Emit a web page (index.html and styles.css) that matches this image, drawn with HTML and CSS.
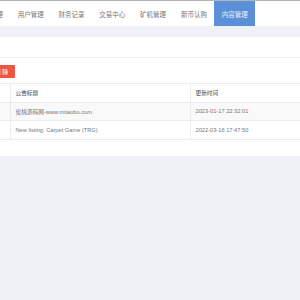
FILE: index.html
```html
<!DOCTYPE html>
<html>
<head>
<meta charset="utf-8">
<link rel="stylesheet" href="styles.css">
</head>
<body>
<div class="topline"></div>
<nav class="nav">
  <div class="tab">系统管理</div>
  <div class="tab">用户管理</div>
  <div class="tab">财务记录</div>
  <div class="tab">交易中心</div>
  <div class="tab">矿机管理</div>
  <div class="tab">新币认购</div>
  <div class="tab active">内容管理</div>
</nav>
<div class="gap"></div>
<section class="panel">
  <div class="panel-head"></div>
  <div class="toolbar">
    <button class="btn-del">删 除</button>
  </div>
  <table class="grid">
    <thead>
      <tr><th class="c1"></th><th class="c2">公告标题</th><th class="c3">更新时间</th></tr>
    </thead>
    <tbody>
      <tr class="odd"><td class="c1"></td><td>蜜桃源码网-www.mitaobo.com</td><td>2023-01-17 22:32:01</td></tr>
      <tr><td class="c1"></td><td>New listing: Carpet Game (TRG)</td><td>2022-03-16 17:47:50</td></tr>
    </tbody>
  </table>
</section>
</body>
</html>
```
FILE: styles.css
```css
html, body {
  margin: 0;
  padding: 0;
  background: #f0f1f6;
  overflow: hidden;
  font-family: "Liberation Sans", "Noto Sans CJK SC", sans-serif;
}
.topline {
  height: 1px;
  background: #b4b4b8;
}
.nav {
  display: flex;
  height: 25px;
  background: #fff;
  margin-left: -30.5px;
}
.tab {
  width: 40.8px;
  flex: none;
  display: flex;
  align-items: center;
  justify-content: center;
  font-size: 6.5px;
  color: #777;
}
.tab.active {
  background: #5b8fd7;
  color: #eef3fc;
}
.gap {
  height: 11px;
}
.panel {
  background: #fff;
  height: 119px;
}
.panel-head {
  height: 20px;
  border-bottom: 1px solid #efefef;
}
.toolbar {
  padding-top: 7px;
  height: 18px;
  margin-left: -12px;
}
.btn-del {
  display: block;
  border: none;
  border-radius: 1px;
  background: #ec5743;
  color: #fff;
  font-family: inherit;
  font-size: 6px;
  height: 13px;
  width: 27px;
  padding: 0;
}
.grid {
  border-collapse: collapse;
  width: 340px;
  margin-left: -20px;
  font-size: 5.7px;
  table-layout: fixed;
}
.grid th, .grid td {
  border: 1px solid #ececec;
  height: 17.5px;
  padding: 0 0 0 4.5px;
  text-align: left;
  color: #777;
  font-weight: normal;
  white-space: nowrap;
}
.grid th {
  color: #444;
}
.grid .c1 { width: 29px; padding: 0; }
.grid .c2 { width: 174.5px; }
.grid tr.odd td { background: #f9f9f9; }
```
